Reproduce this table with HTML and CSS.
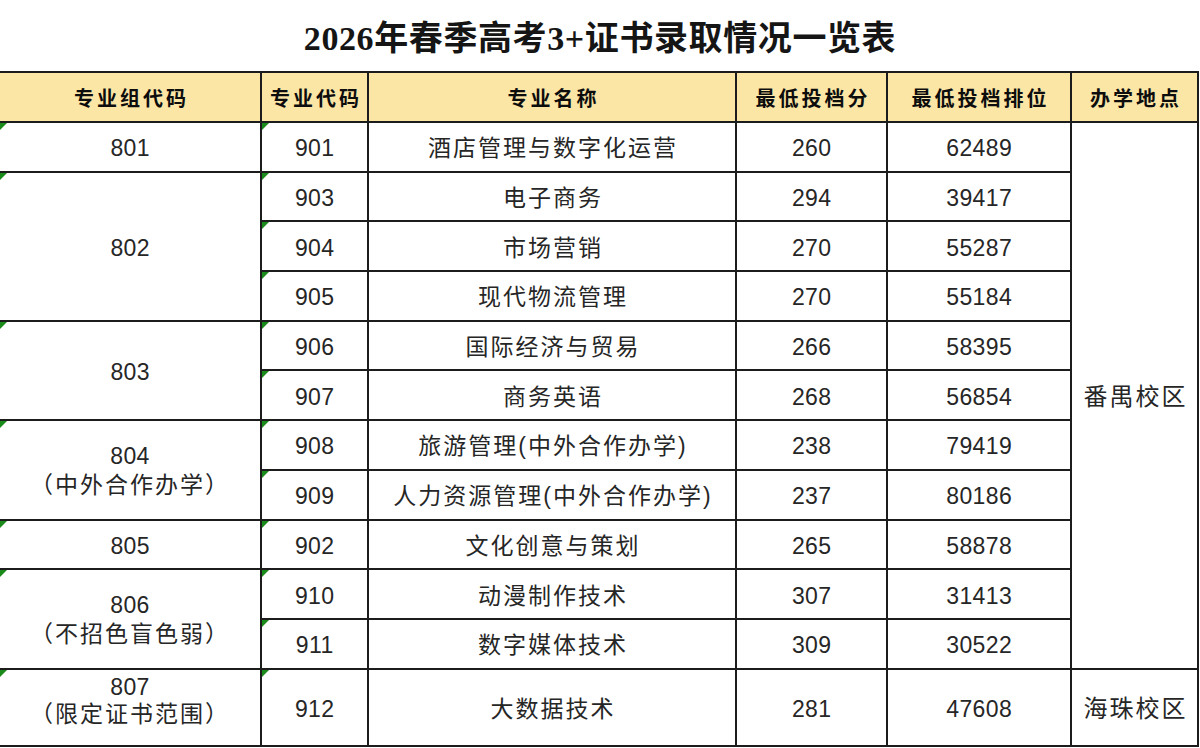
FILE: index.html
```html
<!DOCTYPE html>
<html lang="zh-CN">
<head>
<meta charset="utf-8">
<title>2026年春季高考3+证书录取情况一览表</title>
<link rel="stylesheet" href="styles.css">
</head>
<body>
<div class="sheet">
  <div class="title">2026年春季高考3+证书录取情况一览表</div>
  <table class="grid">
    <colgroup>
      <col class="c1"><col class="c2"><col class="c3"><col class="c4"><col class="c5"><col class="c6">
    </colgroup>
    <thead>
      <tr class="head">
        <th>专业组代码</th><th>专业代码</th><th>专业名称</th><th>最低投档分</th><th>最低投档排位</th><th>办学地点</th>
      </tr>
    </thead>
    <tbody>
      <tr><td class="mark num">801</td><td class="mark num">901</td><td>酒店管理与数字化运营</td><td class="num">260</td><td class="num">62489</td><td rowspan="11" class="campus">番禺校区</td></tr>
      <tr><td rowspan="3" class="mark num">802</td><td class="mark num">903</td><td>电子商务</td><td class="num">294</td><td class="num">39417</td></tr>
      <tr><td class="mark num">904</td><td>市场营销</td><td class="num">270</td><td class="num">55287</td></tr>
      <tr><td class="mark num">905</td><td>现代物流管理</td><td class="num">270</td><td class="num">55184</td></tr>
      <tr><td rowspan="2" class="mark num">803</td><td class="mark num">906</td><td>国际经济与贸易</td><td class="num">266</td><td class="num">58395</td></tr>
      <tr><td class="mark num">907</td><td>商务英语</td><td class="num">268</td><td class="num">56854</td></tr>
      <tr><td rowspan="2" class="mark group"><span class="num">804</span><br>（中外合作办学）</td><td class="mark num">908</td><td>旅游管理(中外合作办学)</td><td class="num">238</td><td class="num">79419</td></tr>
      <tr><td class="mark num">909</td><td>人力资源管理(中外合作办学)</td><td class="num">237</td><td class="num">80186</td></tr>
      <tr><td class="mark num">805</td><td class="mark num">902</td><td>文化创意与策划</td><td class="num">265</td><td class="num">58878</td></tr>
      <tr><td rowspan="2" class="mark group"><span class="num">806</span><br>（不招色盲色弱）</td><td class="mark num">910</td><td>动漫制作技术</td><td class="num">307</td><td class="num">31413</td></tr>
      <tr><td class="mark num">911</td><td>数字媒体技术</td><td class="num">309</td><td class="num">30522</td></tr>
      <tr class="last"><td class="mark group raised"><span class="num">807</span><br>（限定证书范围）</td><td class="mark num">912</td><td>大数据技术</td><td class="num">281</td><td class="num">47608</td><td class="campus">海珠校区</td></tr>
    </tbody>
  </table>
</div>
</body>
</html>
```

FILE: styles.css
```css
html, body {
  margin: 0;
  padding: 0;
  background: #ffffff;
}

.sheet {
  width: 1200px;
  height: 748px;
  overflow: hidden;
  background: #ffffff;
}

.title {
  height: 71px;
  display: flex;
  align-items: center;
  justify-content: center;
  padding-bottom: 1px;
  box-sizing: border-box;
  font-family: "Liberation Serif", "Noto Sans CJK SC", serif;
  font-weight: 700;
  font-size: 34px;
  color: #151515;
  letter-spacing: 0.6px;
}

.grid {
  width: 1198px;
  border-collapse: collapse;
  table-layout: fixed;
  font-family: "Liberation Sans", "Noto Sans CJK SC", sans-serif;
  color: #262626;
}

.c1 { width: 261px; }
.c2 { width: 107px; }
.c3 { width: 368px; }
.c4 { width: 151px; }
.c5 { width: 184px; }
.c6 { width: 127px; }

.grid th,
.grid td {
  border: 2px solid #1c1c1c;
  padding: 0;
  text-align: center;
  vertical-align: middle;
}

.grid tr > :first-child {
  border-left: none;
}

.head {
  height: 50px;
}

.head th {
  background: #fce6a6;
  font-family: "Noto Sans CJK SC", sans-serif;
  font-weight: 700;
  font-size: 20px;
  letter-spacing: 3px;
  text-indent: 3px;
  color: #0d0d0d;
}

.grid tbody tr {
  height: 49.7px;
}

.grid tbody tr.last {
  height: 77px;
}

.grid td {
  position: relative;
  padding-top: 3px;
  font-size: 23px;
  font-weight: 400;
  letter-spacing: 2px;
  text-indent: 2px;
  line-height: 28px;
}

.grid td.num,
.grid .num {
  letter-spacing: 0.4px;
  text-indent: 0.4px;
}

.grid td.group {
  letter-spacing: 2px;
  text-indent: 0;
  font-size: 23px;
  line-height: 29px;
}

.grid td.raised {
  padding-top: 0;
  padding-bottom: 12px;
  line-height: 27px;
}

.grid td.campus {
  letter-spacing: 2px;
  font-size: 24px;
}

.mark::before {
  content: "";
  position: absolute;
  left: 0;
  top: 0;
  width: 0;
  height: 0;
  border-top: 7px solid #1a8a1a;
  border-right: 7px solid transparent;
}
```
